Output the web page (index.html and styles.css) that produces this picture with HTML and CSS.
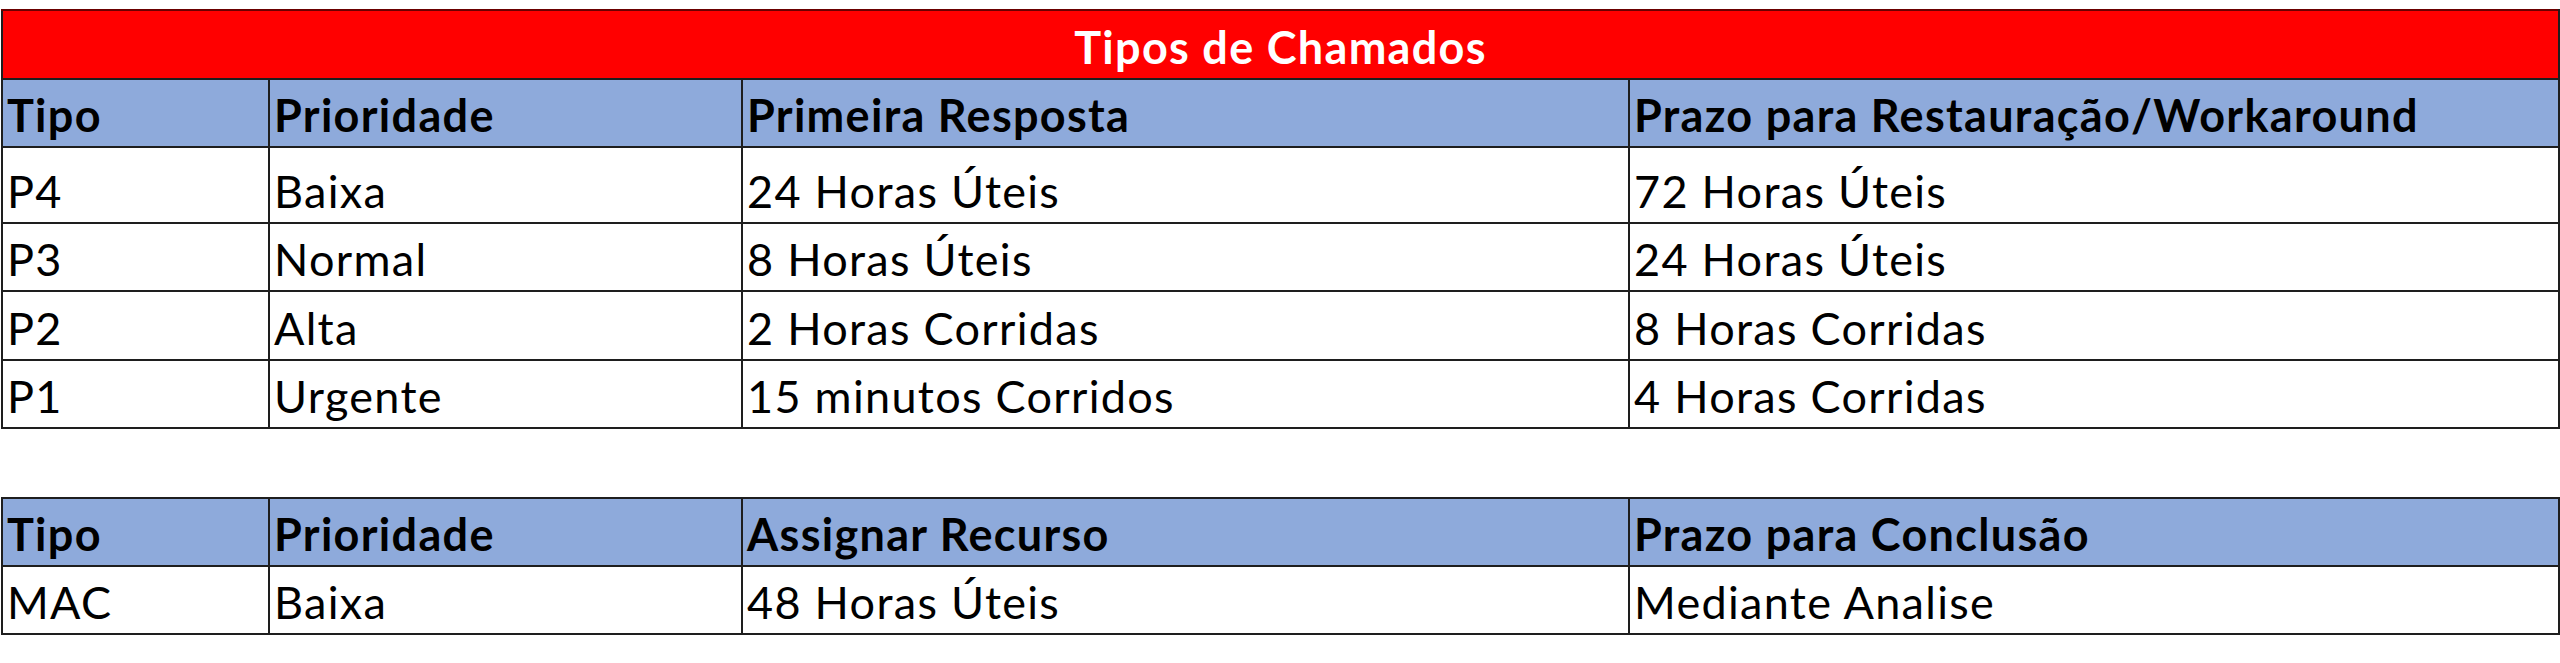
FILE: index.html
```html
<!DOCTYPE html>
<html lang="pt">
<head>
<meta charset="utf-8">
<link rel="stylesheet" href="styles.css">
</head>
<body>
<table class="grid">
  <colgroup>
    <col class="c1"><col class="c2"><col class="c3"><col class="c4">
  </colgroup>
  <tr class="title-row"><td colspan="4" class="title">Tipos de Chamados</td></tr>
  <tr class="head h-a"><th>Tipo</th><th>Prioridade</th><th>Primeira Resposta</th><th>Prazo para Restauração/Workaround</th></tr>
  <tr class="row r-tall"><td>P4</td><td>Baixa</td><td>24 Horas Úteis</td><td>72 Horas Úteis</td></tr>
  <tr class="row"><td>P3</td><td>Normal</td><td>8 Horas Úteis</td><td>24 Horas Úteis</td></tr>
  <tr class="row r-mid"><td>P2</td><td>Alta</td><td>2 Horas Corridas</td><td>8 Horas Corridas</td></tr>
  <tr class="row"><td>P1</td><td>Urgente</td><td>15 minutos Corridos</td><td>4 Horas Corridas</td></tr>
</table>
<table class="grid second">
  <colgroup>
    <col class="c1"><col class="c2"><col class="c3"><col class="c4">
  </colgroup>
  <tr class="head"><th>Tipo</th><th>Prioridade</th><th>Assignar Recurso</th><th>Prazo para Conclusão</th></tr>
  <tr class="row"><td>MAC</td><td>Baixa</td><td>48 Horas Úteis</td><td>Mediante Analise</td></tr>
</table>
</body>
</html>
```
FILE: styles.css
```css
html, body {
  margin: 0;
  padding: 0;
  background: #ffffff;
}
body {
  font-family: "Lato", "Liberation Sans", sans-serif;
  color: #000;
}
.grid {
  border-collapse: collapse;
  table-layout: fixed;
  width: 2557px;
  margin: 9px 0 0 1px;
}
.grid.second {
  margin-top: 68px;
}
.c1 { width: 267px; }
.c2 { width: 473px; }
.c3 { width: 887px; }
.c4 { width: 930px; }
.grid td, .grid th {
  border: 2px solid #1e1e1e;
  font-size: 45px;
  letter-spacing: 1.3px;
  line-height: 1;
  padding: 0 4px 8px 4px;
  vertical-align: bottom;
  text-align: left;
  white-space: nowrap;
  overflow: hidden;
}
.grid th {
  font-weight: 700;
  background: #8eaadb;
}
.grid td {
  font-weight: 400;
}
.title-row { height: 69px; }
.grid td.title {
  background: #ff0000;
  color: #ffffff;
  font-weight: 700;
  text-align: center;
  border-top-color: #6b0000;
}
.head { height: 68px; }
.row { height: 68px; }
.r-tall { height: 76px; }
.r-mid { height: 69px; }
```
